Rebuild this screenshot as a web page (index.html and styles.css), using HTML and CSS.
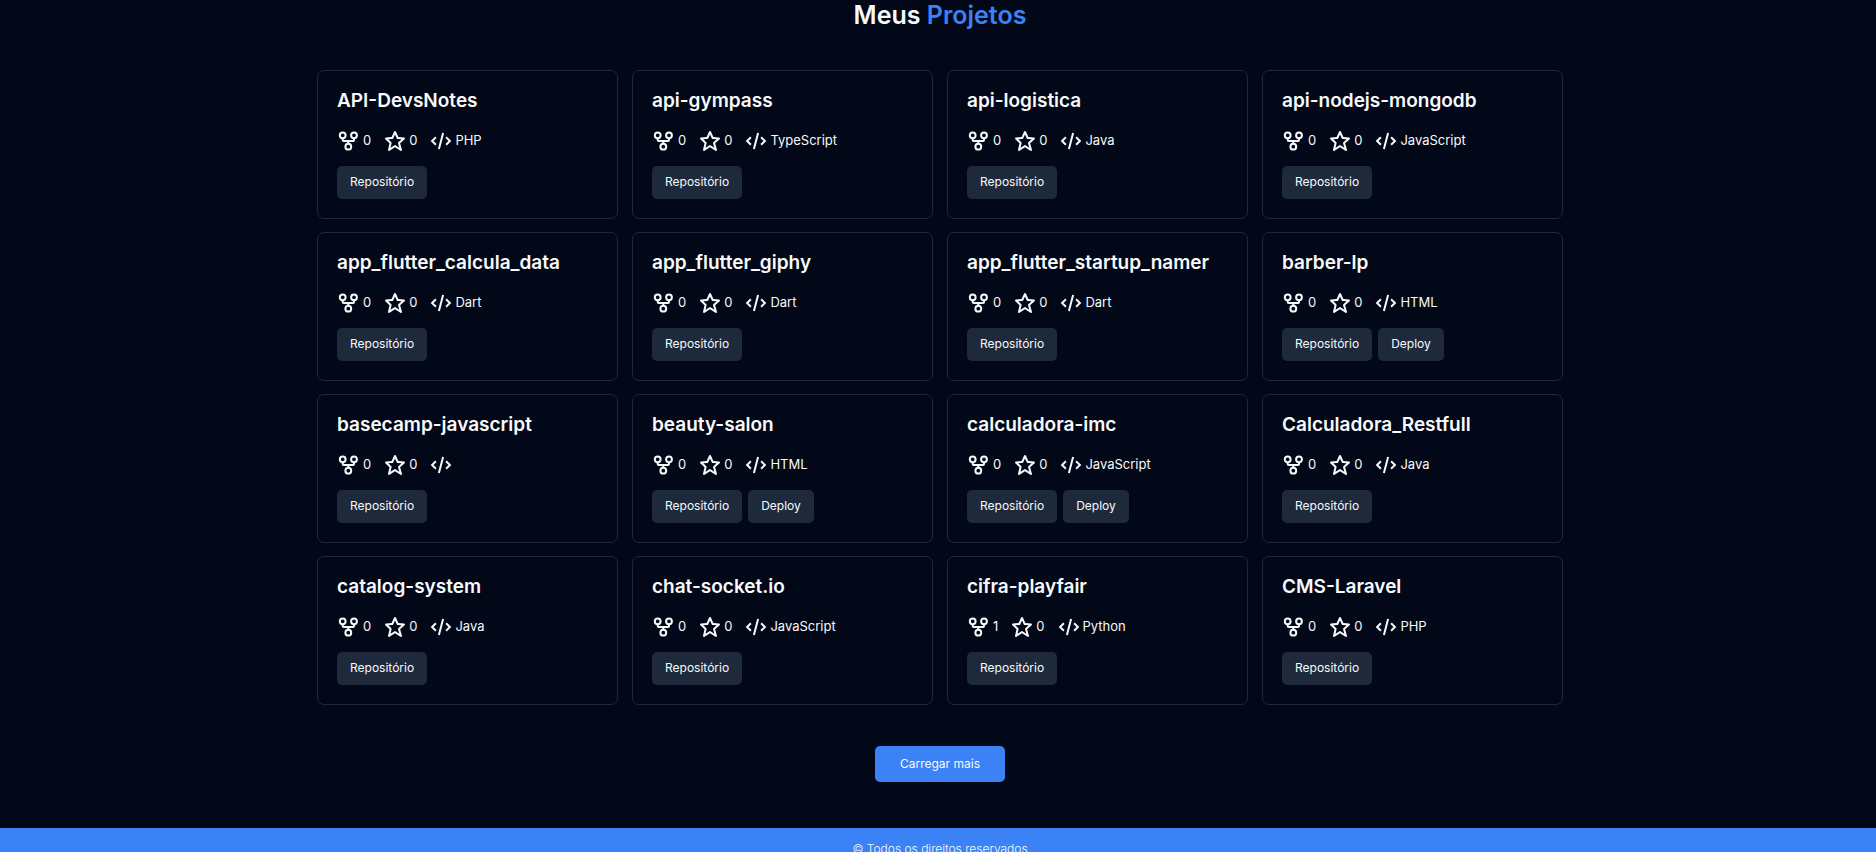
FILE: index.html
```
<!DOCTYPE html>
<html lang="pt-BR">
<head>
<meta charset="utf-8">
<title>Meus Projetos</title>
<link rel="stylesheet" href="styles.css">
</head>
<body>
<svg class="sprite" aria-hidden="true">
  <symbol id="fork" viewBox="0 0 24 24"><g fill="none" stroke="currentColor" stroke-width="2"><circle cx="5.700" cy="6.300" r="2.900"/><circle cx="17" cy="6.300" r="2.900"/><circle cx="11.300" cy="17.700" r="2.900"/><path d="M5.700 9.200v1.800q0 1 1 1h9.300q1 0 1-1v-1.800M11.300 12v2.800"/></g></symbol>
  <symbol id="star" viewBox="0 0 24 24"><path fill="currentColor" d="m6.516 14.323-1.490 6.452a.998.998 0 0 0 1.529 1.057L12 18.202l5.445 3.630a1.001 1.001 0 0 0 1.517-1.106l-1.829-6.400 4.536-4.082a1 1 0 0 0-.590-1.740l-5.701-.454-2.467-5.461a.998.998 0 0 0-1.822 0L8.622 8.050l-5.701.453a1 1 0 0 0-.619 1.713l4.214 4.107zm2.853-4.326a.998.998 0 0 0 .832-.586L12 5.430l1.799 3.981a.998.998 0 0 0 .832.586l3.972.315-3.271 2.944c-.284.256-.397.650-.293 1.018l1.253 4.385-3.736-2.491a.995.995 0 0 0-1.109 0l-3.904 2.603 1.050-4.546a1 1 0 0 0-.276-.940l-3.038-2.962 4.090-.326z"/></symbol>
  <symbol id="code" viewBox="0 0 24 24"><path fill="none" stroke="currentColor" stroke-width="2" d="M6.900 8.300 3.100 12l3.800 3.700M17.100 8.300 20.900 12l-3.800 3.700M14.100 3.900l-4.200 16.200"/></symbol>
</svg>
<main class="page">
  <h1 class="heading">Meus <span class="accent">Projetos</span></h1>
  <section class="grid" id="projects"></section>
  <button class="more" type="button">Carregar mais</button>
</main>
<footer class="footer">© Todos os direitos reservados</footer>
<script src="projects.js"></script>
</body>
</html>
```
FILE: styles.css
```
* { box-sizing: border-box; }
body { margin: 0; background: #020817; color: #f8fafc; font-family: Inter, "Liberation Sans", sans-serif; font-size: 13px; line-height: 20px; overflow: hidden; }
.sprite { display: none; }
.page { display: flex; flex-direction: column; align-items: center; padding: 0 16px 0 20px; }
.heading { margin: 0 0 39px; font-size: 25px; line-height: 31px; font-weight: 600; }
.accent { color: #3b82f6; }
.grid { display: grid; grid-template-columns: repeat(4, 1fr); gap: 13px 14px; width: 100%; max-width: 1246px; }
.card { border: 1px solid #1e293b; border-radius: 7px; padding: 19px; }
.name { margin: 0 0 18px; font-size: 19px; line-height: 21px; font-weight: 600; overflow: hidden; white-space: nowrap; }
.stats { display: flex; gap: 12px; margin-bottom: 13px; }
.stat { display: flex; align-items: flex-start; gap: 2px; height: 24px; line-height: 22px; font-weight: 400; }
.icon { width: 24px; height: 24px; }
.actions { display: flex; gap: 6px; }
.button { padding: 6px 13px 7px; border-radius: 5px; background: #1e293b; color: #f8fafc; font-size: 12px; line-height: 20px; font-weight: 400; text-decoration: none; }
.more { margin: 41px 0 46px; padding: 8px 25px; border: 0; border-radius: 5px; background: #3b82f6; color: #f8fafc; font-family: inherit; font-size: 12px; line-height: 20px; font-weight: 400; }
.footer { padding: 12px 16px 12px 20px; background: #3b82f6; text-align: center; font-size: 12px; line-height: 18px; font-weight: 300; }
```
FILE: projects.js
```
const projects = [
  ["API-DevsNotes", 0, "PHP"], ["api-gympass", 0, "TypeScript"], ["api-logistica", 0, "Java"], ["api-nodejs-mongodb", 0, "JavaScript"],
  ["app_flutter_calcula_data", 0, "Dart"], ["app_flutter_giphy", 0, "Dart"], ["app_flutter_startup_namer", 0, "Dart"], ["barber-lp", 0, "HTML", true],
  ["basecamp-javascript", 0, ""], ["beauty-salon", 0, "HTML", true], ["calculadora-imc", 0, "JavaScript", true], ["Calculadora_Restfull", 0, "Java"],
  ["catalog-system", 0, "Java"], ["chat-socket.io", 0, "JavaScript"], ["cifra-playfair", 1, "Python"], ["CMS-Laravel", 0, "PHP"]
];
const stat = (icon, value) =>
  `<span class="stat"><svg class="icon" aria-hidden="true"><use href="#${icon}"/></svg>${value}</span>`;
document.getElementById("projects").innerHTML = projects.map(([name, forks, language, deployed]) => `
  <article class="card">
    <h2 class="name">${name}</h2>
    <div class="stats">${stat("fork", forks)}${stat("star", 0)}${stat("code", language)}</div>
    <div class="actions"><a class="button" href="#">Repositório</a>${deployed ? '<a class="button" href="#">Deploy</a>' : ""}</div>
  </article>`).join("");
```
